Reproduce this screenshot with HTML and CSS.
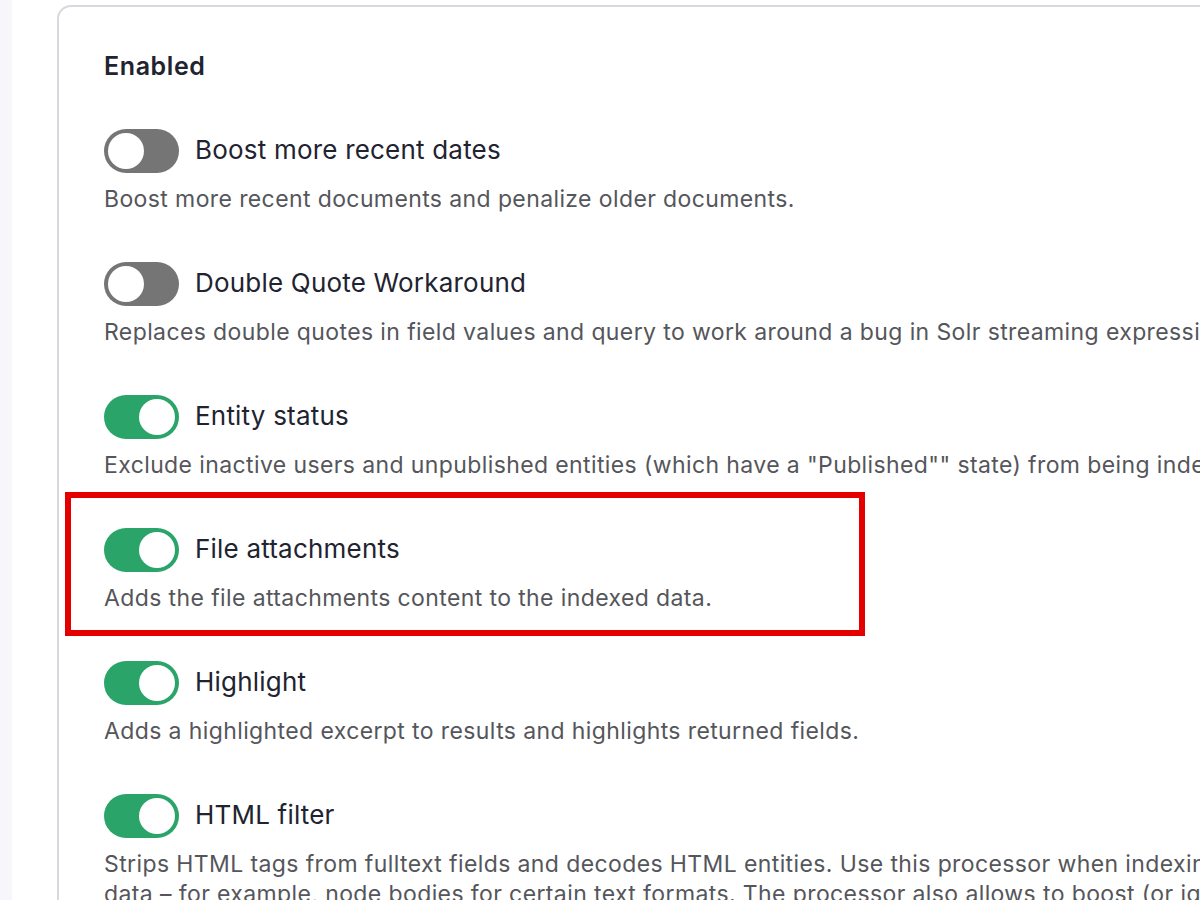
FILE: index.html
```html
<!DOCTYPE html>
<html lang="en">
<head>
<meta charset="utf-8">
<title>Processors</title>
<link rel="stylesheet" href="styles.css">
</head>
<body>
<div class="page">
  <div class="strip"></div>
  <main class="main">
    <section class="card">
      <h2 class="card-title">Enabled</h2>
      <div class="items">
        <div class="item">
          <label class="item-head"><span class="toggle"><span class="knob"></span></span><span class="item-label">Boost more recent dates</span></label>
          <p class="item-desc">Boost more recent documents and penalize older documents.</p>
        </div>
        <div class="item">
          <label class="item-head"><span class="toggle"><span class="knob"></span></span><span class="item-label">Double Quote Workaround</span></label>
          <p class="item-desc">Replaces double quotes in field values and query to work around a bug in Solr streaming expressions.</p>
        </div>
        <div class="item">
          <label class="item-head"><span class="toggle on"><span class="knob"></span></span><span class="item-label">Entity status</span></label>
          <p class="item-desc">Exclude inactive users and unpublished entities (which have a "Published"" state) from being indexed.</p>
        </div>
        <div class="item highlighted">
          <label class="item-head"><span class="toggle on"><span class="knob"></span></span><span class="item-label">File attachments</span></label>
          <p class="item-desc">Adds the file attachments content to the indexed data.</p>
          <span class="mark"></span>
        </div>
        <div class="item">
          <label class="item-head"><span class="toggle on"><span class="knob"></span></span><span class="item-label">Highlight</span></label>
          <p class="item-desc">Adds a highlighted excerpt to results and highlights returned fields.</p>
        </div>
        <div class="item">
          <label class="item-head"><span class="toggle on"><span class="knob"></span></span><span class="item-label">HTML filter</span></label>
          <p class="item-desc">Strips HTML tags from fulltext fields and decodes HTML entities. Use this processor when indexing HTML data – for example, node bodies for certain text formats. The processor also allows to boost (or ignore) the contents of specific elements.</p>
        </div>
      </div>
    </section>
  </main>
</div>
</body>
</html>
```

FILE: styles.css
```css
html, body {
  margin: 0;
  padding: 0;
  height: 100%;
  overflow: hidden;
  background: #ffffff;
}
body {
  font-family: Inter, "Noto Sans", "Liberation Sans", sans-serif;
  color: #222330;
}
.page {
  display: flex;
  height: 900px;
}
.strip {
  flex: 0 0 12px;
  background: #f7f7fb;
}
.main {
  flex: 1 1 auto;
  padding: 5px 0 0 45px;
  min-width: 0;
}
.card {
  width: 1260px;
  border: 2px solid #d8d9de;
  border-radius: 14px;
  padding: 43px 0 0 45px;
  box-sizing: border-box;
  height: 1000px;
}
.card-title {
  margin: 0;
  font-size: 25px;
  font-weight: 600;
  line-height: 32px;
  letter-spacing: 0.6px;
  color: #222330;
}
.items {
  display: flex;
  flex-direction: column;
  margin-top: 47px;
}
.item {
  position: relative;
  height: 133px;
}
.item-head {
  display: flex;
  align-items: center;
  gap: 16px;
  height: 44px;
}
.toggle {
  flex: 0 0 auto;
  width: 75px;
  height: 44px;
  border-radius: 22px;
  background: #757575;
  display: flex;
  align-items: center;
  padding: 0 4px;
  box-sizing: border-box;
}
.toggle.on {
  background: #2aa468;
  justify-content: flex-end;
}
.knob {
  width: 36px;
  height: 36px;
  border-radius: 50%;
  background: #ffffff;
}
.item-label {
  font-size: 26px;
  line-height: 32px;
  letter-spacing: 0.2px;
  color: #222330;
  margin-top: -2px;
}
.item-desc {
  margin: 11px 0 0;
  font-size: 23px;
  line-height: 30px;
  letter-spacing: 0.39px;
  color: #55565b;
}
.mark {
  position: absolute;
  left: -39px;
  top: -36px;
  width: 800px;
  height: 144px;
  border: 6px solid #e50000;
  box-sizing: border-box;
  pointer-events: none;
}
```
